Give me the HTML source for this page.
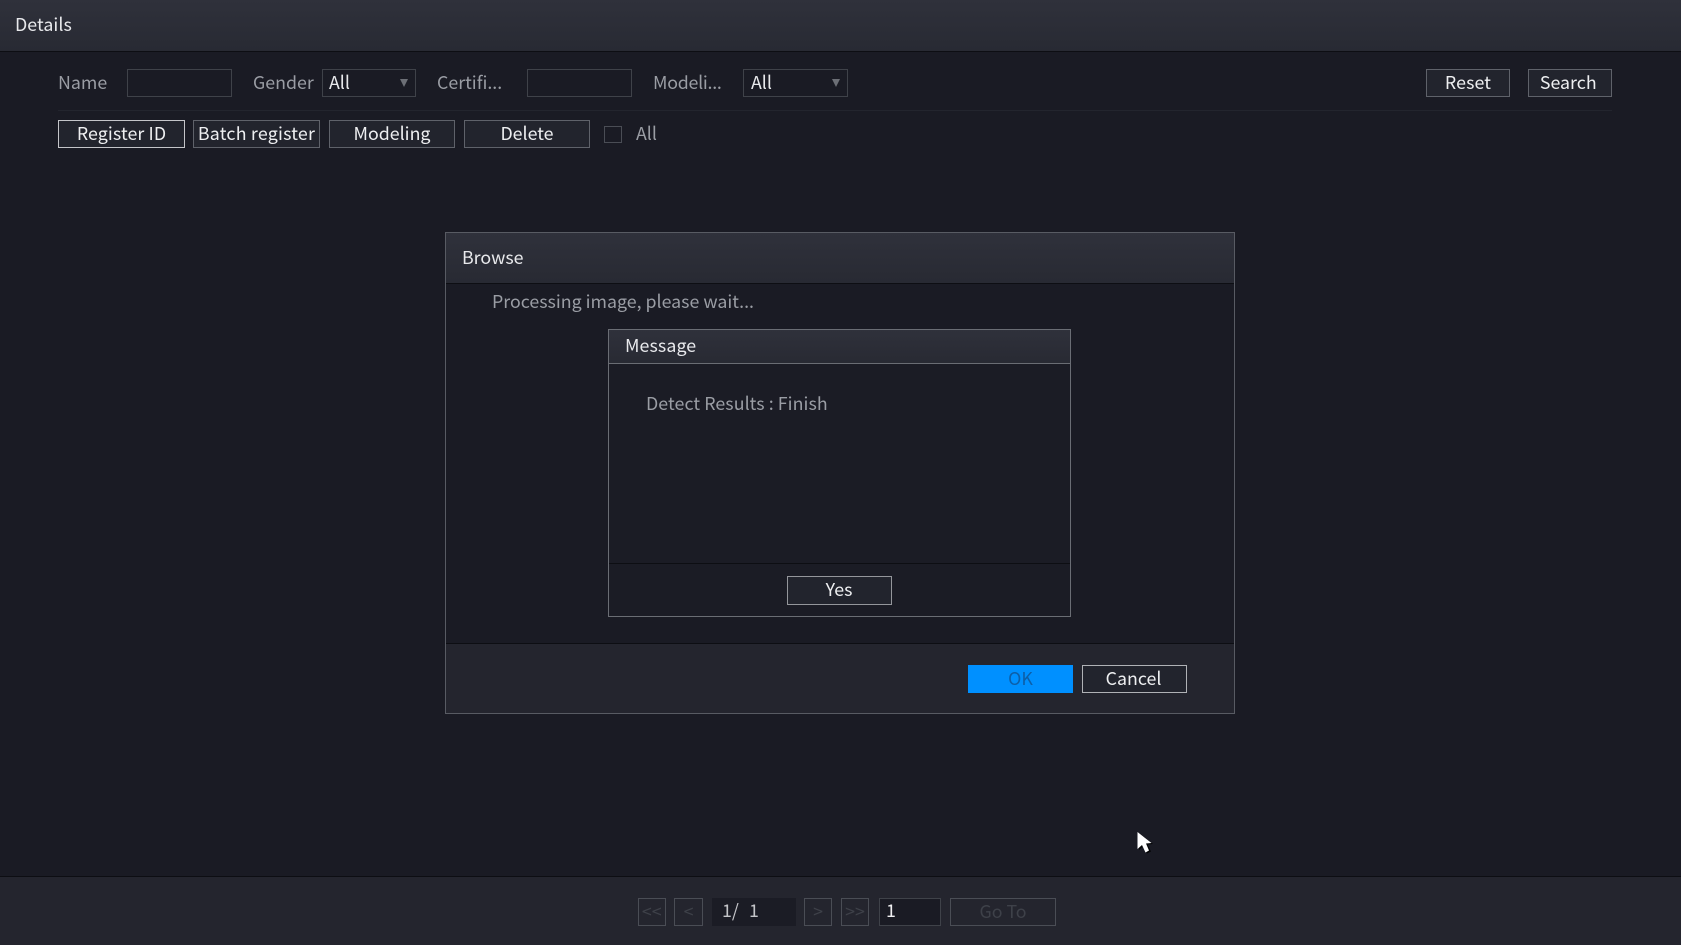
<!DOCTYPE html>
<html>
<head>
<meta charset="utf-8">
<style>
html,body{margin:0;padding:0;width:1681px;height:945px;overflow:hidden;background:#1a1b24}
body{position:relative;font-family:"Noto Sans CJK JP","Liberation Sans",sans-serif;font-size:17.8px;color:#e8e9ec}
div,span{position:absolute;box-sizing:border-box}
.t{white-space:nowrap;line-height:28px;height:28px}
.g{color:#9a9da4}
.b{border:1px solid #5f626a;background:#22242d;text-align:center;color:#eeeff1;line-height:24px;white-space:nowrap;height:28px}
.i{border:1px solid #3f4249;background:#1a1b24;height:28px}
.d{border:1px solid #4a4d55;color:#3e4149;background:#24252e;text-align:center;line-height:24px;height:28px}
.arrow{width:0;height:0;border-left:4px solid transparent;border-right:4px solid transparent;border-top:8px solid #6c6f76}
</style>
</head>
<body>
<div style="left:0;top:0;width:1681px;height:51px;background:linear-gradient(#2f313b,#282a33)"></div>
<div style="left:0;top:51px;width:1681px;height:1px;background:#0d0e13"></div>
<span class="t" style="left:15px;top:10px;letter-spacing:.06px">Details</span>

<span class="t g" style="left:58px;top:68px">Name</span>
<div class="i" style="left:127px;top:69px;width:105px"></div>
<span class="t g" style="left:253px;top:68px">Gender</span>
<div class="i" style="left:322px;top:69px;width:94px"></div>
<span class="t" style="left:329px;top:68px">All</span>
<div class="arrow" style="left:400px;top:79px"></div>
<span class="t g" style="left:437px;top:68px">Certifi...</span>
<div class="i" style="left:527px;top:69px;width:105px"></div>
<span class="t g" style="left:653px;top:68px;letter-spacing:-.25px">Modeli...</span>
<div class="i" style="left:743px;top:69px;width:105px"></div>
<span class="t" style="left:751px;top:68px">All</span>
<div class="arrow" style="left:832px;top:79px"></div>

<div class="b" style="left:1426px;top:69px;width:84px;letter-spacing:.1px">Reset</div>
<div class="b" style="left:1527.5px;top:69px;width:84.5px;padding-right:3px">Search</div>
<div style="left:58px;top:110px;width:1554px;height:1px;background:#23252e"></div>

<div class="b" style="left:58px;top:120px;width:127px;border-color:#c4c5c9;letter-spacing:.1px">Register ID</div>
<div class="b" style="left:193px;top:120px;width:127px;letter-spacing:.22px">Batch register</div>
<div class="b" style="left:329px;top:120px;width:126px">Modeling</div>
<div class="b" style="left:464px;top:120px;width:126px">Delete</div>
<div style="left:604px;top:126px;width:18px;height:17px;border:1px solid #4a4d55"></div>
<span class="t g" style="left:636px;top:119px">All</span>

<!-- Browse dialog -->
<div style="left:444.5px;top:232px;width:790px;height:482px;border:1px solid #585b63;background:#1a1b24"></div>
<div style="left:446px;top:233px;width:788px;height:50px;background:linear-gradient(#2f313b,#282a33)"></div>
<div style="left:446px;top:283px;width:788px;height:1px;background:#0d0e13"></div>
<span class="t" style="left:462px;top:242.5px">Browse</span>
<span class="t g" style="left:492px;top:286.5px">Processing image, please wait...</span>
<div style="left:446px;top:643px;width:788px;height:1px;background:#0d0e13"></div>
<div style="left:446px;top:644px;width:788px;height:69px;background:#24252e"></div>
<div class="b" style="left:968px;top:665px;width:105px;background:#0090ff;border-color:#0090ff;color:#0d5fa8">OK</div>
<div class="b" style="left:1082px;top:665px;width:105px;border-color:#b0b2b6;padding-right:2px">Cancel</div>

<!-- Message dialog -->
<div style="left:608px;top:329px;width:463px;height:288px;border:1px solid #6a6d74;background:#1b1c25"></div>
<div style="left:609px;top:330px;width:461px;height:33px;background:linear-gradient(#2f313b,#282a33)"></div>
<div style="left:609px;top:363px;width:461px;height:1px;background:#6a6d74"></div>
<span class="t" style="left:625px;top:331px;letter-spacing:.1px">Message</span>
<span class="t g" style="left:646px;top:389px;letter-spacing:.07px">Detect Results : Finish</span>
<div style="left:609px;top:563px;width:461px;height:1px;background:#0d0e13"></div>
<div class="b" style="left:787px;top:576px;width:105px;height:29px;border:1.5px solid #94969b;line-height:24px;padding-right:1px">Yes</div>

<!-- Footer -->
<div style="left:0;top:876px;width:1681px;height:1px;background:#0d0e13"></div>
<div style="left:0;top:877px;width:1681px;height:68px;background:#24252e"></div>
<div class="d" style="left:637.5px;top:898px;width:28.5px">&lt;&lt;</div>
<div class="d" style="left:674px;top:898px;width:29px">&lt;</div>
<div style="left:712px;top:898px;width:84px;height:28px;background:#1b1c25"></div>
<span class="t" style="left:722px;top:896px;color:#c4c5c9">1/</span>
<span class="t" style="left:749px;top:896px;color:#c4c5c9">1</span>
<div class="d" style="left:804px;top:898px;width:28px">&gt;</div>
<div class="d" style="left:841px;top:898px;width:28px">&gt;&gt;</div>
<div class="i" style="left:878.5px;top:898px;width:62px;border-color:#3f4249"></div>
<span class="t" style="left:886px;top:896px;color:#f0f0f2">1</span>
<div class="d" style="left:950px;top:898px;width:106px">Go To</div>

<!-- Cursor -->
<svg style="position:absolute;left:1134px;top:828px" width="26" height="30" viewBox="0 0 26 30">
<path d="M5 5 L5 22 L9.5 18 L13 25.5 L17 23.5 L13.5 16.5 L19 16 Z" fill="#000" opacity=".85"/>
<path d="M3.5 4 L3.5 21 L8 17 L11.5 24.5 L15 22.5 L12 15.5 L17.5 15 Z" fill="#fff"/>
</svg>
</body>
</html>
